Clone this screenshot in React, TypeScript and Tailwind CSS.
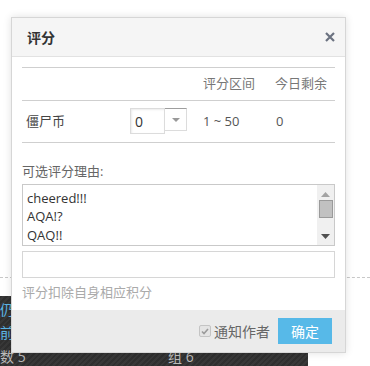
import React from "react";

const cjk = { fontFamily: '"Open Sans", "Noto Sans CJK SC", sans-serif' };

const reasons = ["cheered!!!", "AQA!?", "QAQ!!"];

const Scrollbar = () => (
    <div className="flex w-[17px] flex-col items-center bg-[#f0f0f0] pt-[7px]">
        <svg width="9" height="5" viewBox="0 0 9 5">
            <path d="M0 5 L4.5 0 L9 5 Z" fill="#a3a3a3" />
        </svg>
        <div className="mt-[3px] h-[18px] w-[14px] border border-[#9a9a9a] bg-[#c1c1c1]" />
        <div className="flex-1" />
        <svg width="9" height="5" viewBox="0 0 9 5" className="mb-[6px]">
            <path d="M0 0 L9 0 L4.5 5 Z" fill="#505050" />
        </svg>
    </div>
);

export default function App() {
    return (
        <div className="relative h-[366px] w-[370px] overflow-hidden bg-white" style={cjk}>
            {/* page behind the dialog */}
            <div className="pt-[277px]">
                <div className="border-t border-dashed border-[#c8c8c8]" />
                <div className="mt-[18px] h-[71px] w-[308px] bg-[repeating-linear-gradient(135deg,#2f2f2f_0,#2f2f2f_2px,#383838_2px,#383838_4px)] pt-[2px] text-[14px] leading-[23px]">
                    <div className="text-[#5cb6e6]">仍。</div>
                    <div className="text-[#5cb6e6]">前在</div>
                    <div className="mt-[1px] flex text-[#bbb]">
                        <span className="w-[168px]">数 5</span>
                        <span>组 6</span>
                    </div>
                </div>
            </div>

            {/* dialog */}
            <div className="absolute left-[11px] top-[17px] w-[335px] border border-[#d6d6d6] bg-white shadow-[0_0_8px_rgba(0,0,0,0.12)]">
                <div className="flex h-[39px] items-center justify-between border-b border-[#e2e2e2] bg-[#f5f5f5] pl-[15px] pr-[10px]">
                    <span className="text-[14px] font-bold text-[#333]">评分</span>
                    <svg width="10" height="10" viewBox="0 0 10 10">
                        <path d="M1 1 L9 9 M9 1 L1 9" stroke="#6b7280" strokeWidth="2.2" />
                    </svg>
                </div>

                <div className="px-[10px] pt-[10px] text-[13px] text-[#555]">
                    <div className="grid grid-cols-[104px_73px_72px_1fr] border-t border-[#cfcfcf]">
                        <div className="h-[33px] border-b border-[#cfcfcf]" />
                        <div className="h-[33px] border-b border-[#cfcfcf]" />
                        <div className="flex h-[33px] items-center border-b border-[#cfcfcf] pl-[4px] text-[#777]">评分区间</div>
                        <div className="flex h-[33px] items-center border-b border-[#cfcfcf] pl-[4px] text-[#777]">今日剩余</div>

                        <div className="flex h-[42px] items-center border-b border-[#cfcfcf] pl-[4px] text-[#444]">僵尸币</div>
                        <div className="flex h-[42px] items-start border-b border-[#cfcfcf] pl-[4px] pt-[7px]">
                            <div className="flex h-[26px] w-[35px] items-center border border-[#dcdcdc] pl-[4px] shadow-[inset_1px_1px_2px_rgba(0,0,0,0.08)] text-[14px] text-[#333]">0</div>
                            <div className="flex h-[23px] w-[22px] items-center justify-center border border-[#dcdcdc] border-t-[#9e9e9e] border-l-0">
                                <svg width="8" height="4" viewBox="0 0 8 4">
                                    <path d="M0 0 L8 0 L4 4 Z" fill="#999" />
                                </svg>
                            </div>
                        </div>
                        <div className="flex h-[42px] items-center border-b border-[#cfcfcf] pl-[4px] text-[#555]">1 ~ 50</div>
                        <div className="flex h-[42px] items-center border-b border-[#cfcfcf] pl-[5px] text-[#555]">0</div>
                    </div>

                    <div className="mt-[19px] text-[#666]">可选评分理由:</div>

                    <div className="mt-[2px] flex h-[62px] w-[313px] border border-[#c9c9c9]">
                        <div className="flex-1 pl-[4px] pt-[4px] text-[13px] leading-[18.5px] text-[#333]">
                            {reasons.map((r) => (
                                <div key={r}>{r}</div>
                            ))}
                        </div>
                        <Scrollbar />
                    </div>

                    <div className="mt-[5px] h-[27px] w-[313px] border border-[#d6d6d6]" />

                    <div className="mt-[5px] pb-[8px] text-[13px] text-[#aaa]">评分扣除自身相应积分</div>
                </div>

                <div className="flex h-[42px] items-center justify-end gap-[3px] bg-[#ebebeb] pr-[13px]">
                    <div className="flex h-[12px] w-[12px] items-center justify-center rounded-[2px] border border-[#c4c4c4] bg-[#e4e4e4]">
                        <svg width="8" height="7" viewBox="0 0 8 7">
                            <path d="M1 3.5 L3 5.5 L7 1" stroke="#9a9a9a" strokeWidth="1.6" fill="none" />
                        </svg>
                    </div>
                    <span className="mr-[5px] text-[14px] text-[#666]">通知作者</span>
                    <div className="flex h-[26px] w-[54px] items-center justify-center bg-[#57b9e8] text-[14px] text-white">确定</div>
                </div>
            </div>
        </div>
    );
}
